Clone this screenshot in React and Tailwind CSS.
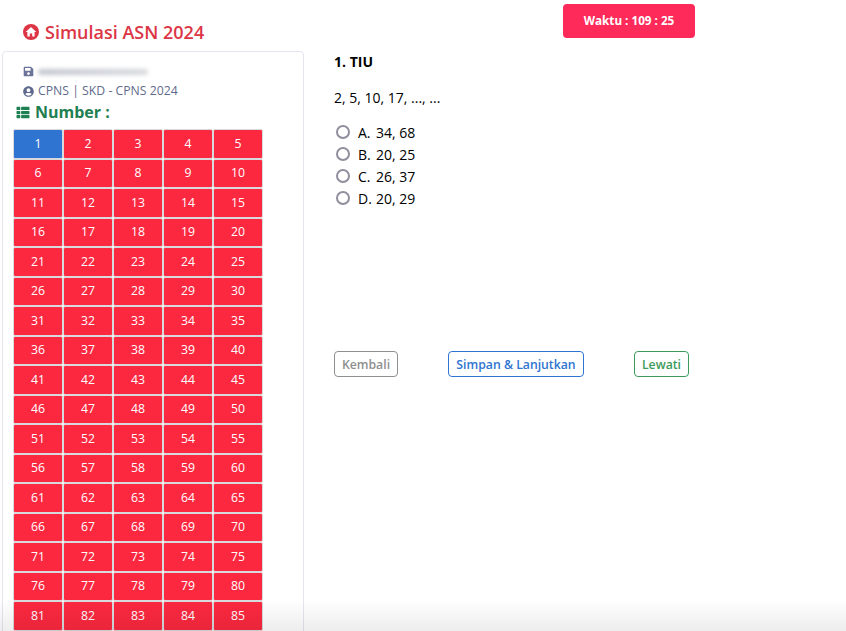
import React from 'react';
import { FaSave, FaUserCircle, FaThList } from 'react-icons/fa';

const numbers = Array.from({ length: 85 }, (_, i) => i + 1);
const options = [
    ['A.', '34, 68'],
    ['B.', '20, 25'],
    ['C.', '26, 37'],
    ['D.', '20, 29'],
];

const HomeCircle = () => (
    <svg viewBox="0 0 16 16" className="w-[16px] h-[16px] shrink-0">
        <circle cx="8" cy="8" r="8" fill="currentColor" />
        <path d="M8 2.9 13.3 8 H11.6 V12.4 H9.2 V9.6 H6.8 V12.4 H4.4 V8 H2.7 Z" fill="#fff" />
    </svg>
);

const App = () => (
    <div className="relative h-screen overflow-hidden bg-white font-['Open_Sans','Noto_Sans',sans-serif] text-[14px] text-black flex">
        <div className="w-[304px] shrink-0 pl-[2px]">
            <div className="h-[51px] pl-[21px] pt-[20px] flex items-start gap-[6px] text-[#dc3545]">
                <div className="pt-[4px]"><HomeCircle /></div>
                <h1 className="text-[18px] leading-[25px] font-semibold">Simulasi ASN 2024</h1>
            </div>
            <div className="h-[700px] border border-[#e3e6f0] rounded-[4px] pl-[10px] pt-[11px]">
                <div className="pl-[10px] h-[17px] flex items-center gap-[4px] text-[#6b7399]">
                    <FaSave className="w-[11px] h-[11px]" />
                    <div className="w-[110px] h-[6px] rounded-full bg-gradient-to-r from-[#c4c6cf] to-[#d8d9de] blur-[2px]"></div>
                </div>
                <div className="pl-[10px] mt-[2px] h-[18px] flex items-center gap-[4px] text-[12.25px] text-[#5f6b8d]">
                    <FaUserCircle className="w-[11px] h-[11px]" />
                    <span>CPNS | SKD - CPNS 2024</span>
                </div>
                <div className="mt-[1px] h-[22px] pl-[3px] flex items-center gap-[5px] text-[#1e8050] text-[16px] font-bold">
                    <FaThList className="w-[14px] h-[13px]" />
                    <span>Number :</span>
                </div>
                <div className="mt-[6px] grid grid-cols-[repeat(5,50px)] auto-rows-[29.5px] w-[250px]">
                    {numbers.map((n) => (
                        <div
                            key={n}
                            className={`flex items-center justify-center border border-[#d8d9dd] rounded-[2px] text-white text-[12.25px] ${n === 1 ? 'bg-[#2f74d0] font-normal' : 'bg-[#fb283f] font-medium'}`}
                        >
                            {n}
                        </div>
                    ))}
                </div>
            </div>
        </div>

        <div className="flex-1 pl-[30px]">
            <div className="h-[51px] relative">
                <div className="absolute left-[229px] top-[4px] w-[132px] h-[34px] rounded-[4px] bg-[#fe2a5a] text-white text-[11.7px] font-bold flex items-center justify-center">
                    Waktu : 109 : 25
                </div>
            </div>
            <div className="font-bold leading-[21px]">1. TIU</div>
            <p className="mt-[15px] leading-[21px]">2, 5, 10, 17, ..., ...</p>
            <div className="mt-[13px] flex flex-col">
                {options.map(([letter, value]) => (
                    <label key={letter} className="h-[22px] flex items-center pl-[2px]">
                        <span className="w-[14px] h-[14px] rounded-full border-2 border-[#8f8f9d] bg-white mr-[8px]"></span>
                        <span className="w-[18px]">{letter}</span>
                        <span>{value}</span>
                    </label>
                ))}
            </div>
            <div className="mt-[142px] flex items-start w-[355px] justify-between text-[12.25px] font-semibold">
                <button className="h-[26px] w-[64px] pt-[2px] rounded-[4px] border border-[#8f8f8f] text-[#8f8f8f]">Kembali</button>
                <button className="h-[26px] w-[136px] pt-[2px] rounded-[4px] border border-[#2f74d0] text-[#2f74d0]">Simpan &amp; Lanjutkan</button>
                <button className="h-[26px] w-[55px] pt-[2px] rounded-[4px] border border-[#3d9a5a] text-[#3d9a5a]">Lewati</button>
            </div>
        </div>

        <div className="absolute left-0 right-0 bottom-0 h-[32px] bg-gradient-to-b from-transparent to-[#00000012] pointer-events-none"></div>
    </div>
);

export default App;
